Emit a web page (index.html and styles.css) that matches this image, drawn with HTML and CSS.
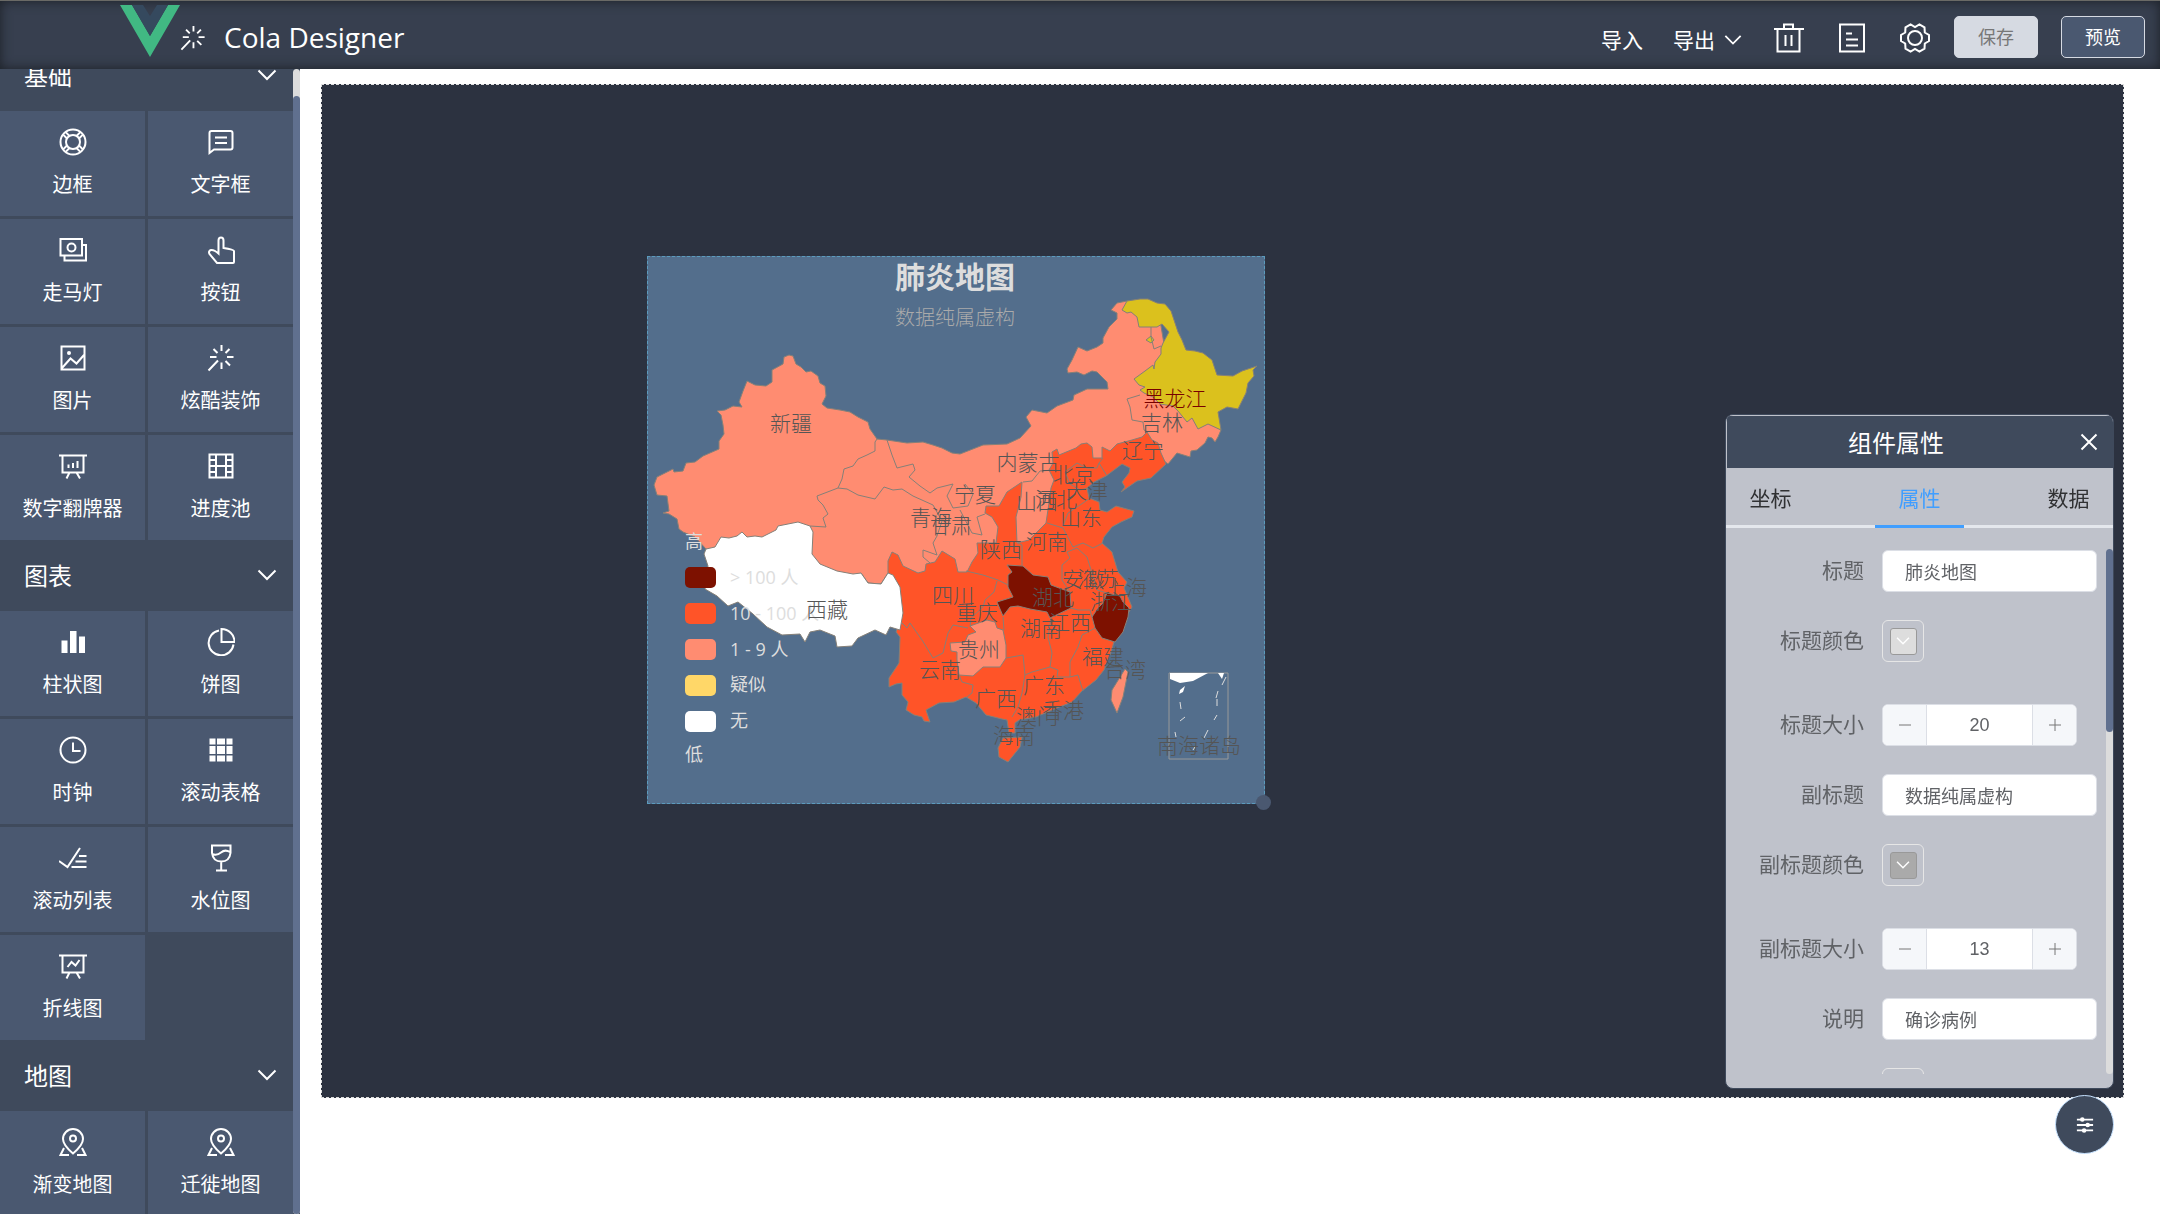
FILE: index.html
```html
<!DOCTYPE html>
<html lang="zh-CN">
<head>
<meta charset="utf-8">
<title>Cola Designer</title>
<link rel="stylesheet" href="styles.css">
</head>
<body>
<svg class="sprite" aria-hidden="true">
  <symbol id="i-help" viewBox="0 0 28 28"><circle cx="14" cy="14" r="12.5"/><circle cx="14" cy="14" r="7"/><path d="M20 10.5l3.6-3.6M17.5 8l3.6-3.6M20 17.5l3.6 3.6M17.5 20l3.6 3.6M8 10.5L4.4 6.9M10.5 8L6.900 4.400M8 17.5l-3.600 3.600M10.500 20l-3.600 3.600"/></symbol>
  <symbol id="i-chat" viewBox="0 0 28 28"><path d="M2.500 25V5q0-2 2-2h19q2 0 2 2v14.500q0 2-2 2H7zM8 9.500h12M8 15h12"/></symbol>
  <symbol id="i-money" viewBox="0 0 28 28"><path d="M1.500 3H23v16.500H1.500zM23.500 9H27v15.500H5.500v-5"/><circle cx="12.500" cy="11.500" r="4"/></symbol>
  <symbol id="i-hand" viewBox="0 0 28 28"><path d="M11.500 17.500V4.500q0-3 2.500-3t2.500 3v7.500q10 1.500 10.500 3v11q0 1-1 1H10L2.500 18q-1.500-3 1.500-4 3-.500 7.500 3.500z"/></symbol>
  <symbol id="i-pic" viewBox="0 0 28 28"><path d="M2.500 2.500h23v23h-23zM3 24l8.500-9.500 6 5L25 11"/><circle class="solid" cx="10" cy="9" r="2"/></symbol>
  <symbol id="i-magic" viewBox="0 0 28 28"><path d="M14.500 1v6M14.500 18.500V25M3 13h6.500M20 13h6.500M6.500 5l4 4M22.500 5l-4 4M18.500 17l4.500 4.500M11 16.500L1.500 26.500"/></symbol>
  <symbol id="i-board" viewBox="0 0 28 28"><path d="M0 3.500h28M3.500 4v16.500h21V4M10.500 20.500L7.500 26.500M17.500 20.500l3.500 6M9.500 16v-3.500M14 16v-5M18.500 16V9"/></symbol>
  <symbol id="i-film" viewBox="0 0 28 28"><path d="M2.500 2.500h23v23h-23zM9 2.500v23M19 2.500v23M9 14h10M2.500 8H9M2.500 14H9M2.500 20H9M19 8h6.500M19 14h6.500M19 20h6.500"/></symbol>
  <symbol id="i-bars" viewBox="0 0 28 28"><path class="solid" d="M2.500 12.500H8.500V25h-6zM11 3h6.500v22H11zM20 8.500h6V25h-6z"/></symbol>
  <symbol id="i-pie" viewBox="0 0 28 28"><path d="M12 2.500A12.500 12.500 0 1 0 26.500 16.500M14.500 1v13h13A13 13 0 0 0 14.500 1z"/></symbol>
  <symbol id="i-clock" viewBox="0 0 28 28"><circle cx="14" cy="14" r="12.500"/><path d="M14 6.500V15h7.500"/></symbol>
  <symbol id="i-grid" viewBox="0 0 28 28"><path class="solid" d="M2.500 2.500h6v6h-6zM10 2.500h8v6h-8zM19.500 2.500h6v6h-6zM2.500 10h6v8h-6zM10 10h8v8h-8zM19.500 10h6v8h-6zM2.500 19.500h6v6h-6zM10 19.500h8v6h-8zM19.500 19.500h6v6h-6z"/></symbol>
  <symbol id="i-finished" viewBox="0 0 28 28"><path d="M0 17l8.500 6L21 4M20 12h7.500M16.500 17.500h11M12.500 23h15"/></symbol>
  <symbol id="i-goblet" viewBox="0 0 28 28"><path d="M5 1.500h18.500V9q-1 8.500-9.250 8.500T5 9zM14.200 17.500v9M9 26.500h11M5 10q5 2 9-1.500T23 8"/></symbol>
  <symbol id="i-line" viewBox="0 0 28 28"><path d="M0 3.500h28M3.500 4v16.500h21V4M10.500 20.500L7.500 26.500M17.500 20.500l3.500 6M8.500 15l4-5 4 3.500 4-5.500"/></symbol>
  <symbol id="i-pin" viewBox="0 0 28 28"><path d="M14 25.500Q4 17 4 11a10 10 0 0 1 20 0q0 6-10 14.500zM5 20l-3.500 7H10M23 20l3.500 7H18"/><circle cx="14" cy="10.500" r="3"/></symbol>
  <symbol id="i-down" viewBox="0 0 20 20"><path d="M1.500 5.500L10 14l8.500-8.500"/></symbol>
  <symbol id="i-trash" viewBox="0 0 30 30"><path d="M0 6h30M3.500 6v22.500h22V6M10 6V1.500h9V6M11.500 12v11M17.500 12v11"/></symbol>
  <symbol id="i-doc" viewBox="0 0 30 30"><path d="M3 1.500h24v27H3zM9 10.500h6M9 16.500h12M9 22.500h12"/></symbol>
  <symbol id="i-gear" viewBox="0 0 30 30"><path d="M29 12v6l-4.200 2.500-.3 5.100-5.100 2.900-4.400-2.500-4.400 2.500-5.100-2.900-.3-5.100L1 18v-6l4.200-2.500.3-5.100 5.100-2.900L15 4l4.400-2.500 5.100 2.900.3 5.100z"/><circle cx="15" cy="15" r="7"/></symbol>
  <symbol id="i-close" viewBox="0 0 20 20"><path d="M2.500 2.500l15 15M17.500 2.500l-15 15"/></symbol>
  <symbol id="i-minus" viewBox="0 0 14 14"><path d="M1 7h12"/></symbol>
  <symbol id="i-plus" viewBox="0 0 14 14"><path d="M1 7h12M7 1v12"/></symbol>
  <symbol id="i-sliders" viewBox="0 0 20 20"><path d="M1 4h18M1 10h18M1 16h18"/><circle class="solid" cx="7" cy="4" r="2.500"/><circle class="solid" cx="13" cy="10" r="2.500"/><circle class="solid" cx="9" cy="16" r="2.500"/></symbol>
</svg>

<header class="topbar">
  <svg class="logo" viewBox="0 0 60 52" aria-hidden="true"><path fill="#41b883" d="M0 0h12l18 31L48 0h12L30 52z"/><path fill="#35495e" d="M12 0h11l7 11 7-11h11L30 31z"/></svg>
  <svg class="icon wand" aria-hidden="true"><use href="#i-magic"/></svg>
  <h1 class="brand">Cola Designer</h1>
  <nav class="actions">
    <a href="#import" class="action">导入</a>
    <a href="#export" class="action">导出 <svg class="icon icon-sm"><use href="#i-down"/></svg></a>
    <button class="icon-btn" type="button" aria-label="清空"><svg class="icon icon-lg"><use href="#i-trash"/></svg></button>
    <button class="icon-btn" type="button" aria-label="文档"><svg class="icon icon-lg"><use href="#i-doc"/></svg></button>
    <button class="icon-btn" type="button" aria-label="设置"><svg class="icon icon-lg"><use href="#i-gear"/></svg></button>
    <button class="btn btn-save" type="button">保存</button>
    <button class="btn btn-preview" type="button">预览</button>
  </nav>
</header>

<div class="workspace">
  <aside class="sidebar">
    <div class="library">
      <h2 class="group">基础 <svg class="icon icon-md"><use href="#i-down"/></svg></h2>
      <div class="tiles">
        <button class="tile" type="button"><svg class="icon"><use href="#i-help"/></svg>边框</button>
        <button class="tile" type="button"><svg class="icon"><use href="#i-chat"/></svg>文字框</button>
        <button class="tile" type="button"><svg class="icon"><use href="#i-money"/></svg>走马灯</button>
        <button class="tile" type="button"><svg class="icon"><use href="#i-hand"/></svg>按钮</button>
        <button class="tile" type="button"><svg class="icon"><use href="#i-pic"/></svg>图片</button>
        <button class="tile" type="button"><svg class="icon"><use href="#i-magic"/></svg>炫酷装饰</button>
        <button class="tile" type="button"><svg class="icon"><use href="#i-board"/></svg>数字翻牌器</button>
        <button class="tile" type="button"><svg class="icon"><use href="#i-film"/></svg>进度池</button>
      </div>
      <h2 class="group">图表 <svg class="icon icon-md"><use href="#i-down"/></svg></h2>
      <div class="tiles">
        <button class="tile" type="button"><svg class="icon"><use href="#i-bars"/></svg>柱状图</button>
        <button class="tile" type="button"><svg class="icon"><use href="#i-pie"/></svg>饼图</button>
        <button class="tile" type="button"><svg class="icon"><use href="#i-clock"/></svg>时钟</button>
        <button class="tile" type="button"><svg class="icon"><use href="#i-grid"/></svg>滚动表格</button>
        <button class="tile" type="button"><svg class="icon"><use href="#i-finished"/></svg>滚动列表</button>
        <button class="tile" type="button"><svg class="icon"><use href="#i-goblet"/></svg>水位图</button>
        <button class="tile" type="button"><svg class="icon"><use href="#i-line"/></svg>折线图</button>
      </div>
      <h2 class="group">地图 <svg class="icon icon-md"><use href="#i-down"/></svg></h2>
      <div class="tiles">
        <button class="tile" type="button"><svg class="icon"><use href="#i-pin"/></svg>渐变地图</button>
        <button class="tile" type="button"><svg class="icon"><use href="#i-pin"/></svg>迁徙地图</button>
      </div>
    </div>
    <div class="scrollbar"><div class="thumb"></div></div>
  </aside>

  <main class="stage">
    <div class="canvas">
      <section class="widget">
        <svg class="map" viewBox="648 257 616 546" role="img" aria-label="肺炎地图">
          <g class="province">
            <polygon class="low" points="784,357 789,355 793,356 796,364 801,367 806,372 811,371 818,376 820,383 825,386 826,396 822,404 827,408 840,410 850,412 858,417 868,422 870,429 877,439 887,440 907,443 923,442 933,445 942,448 952,453 960,454 983,445 1007,444 1020,438 1031,426 1026,417 1032,410 1047,413 1057,406 1073,400 1074,395 1087,389 1108,389 1107,382 1097,372 1092,371 1084,375 1077,372 1068,373 1067,369 1072,360 1078,347 1087,351 1097,347 1103,343 1103,338 1109,327 1117,319 1117,313 1111,310 1117,303 1127,301 1160,320 1165,350 1150,380 1180,405 1221,430 1218,437 1215,442 1212,438 1208,437 1205,443 1197,450 1191,451 1190,457 1177,453 1168,464 1150,450 1118,455 1097,463 1085,478 1060,500 1045,530 1020,560 960,590 900,590 893,583 888,573 881,584 868,583 861,573 840,585 810,560 760,560 706,549 695,537 683,532 679,529 677,519 669,514 663,513 669,511 667,496 657,495 654,485 657,477 673,469 674,472 683,471 686,463 695,462 703,456 719,449 719,441 724,434 723,425 721,415 717,411 725,410 733,406 742,407 739,402 743,391 747,381 755,385 766,386 772,382 772,370 783,364"/>
            <path class="mid" d="M888 573v-12l4-9 6 3 5 11 15 7 7-2 1-7 9-2 7-11 13 8 3 13 9 0 5-10 6-9-1-10 19 0 2-16-6-10-7-4 1-7h13l8-14 15-10-1 15-5 20 1 26 12-3 17-17 3-20 2-15 3-8-5-10 4-7-1-11 5-3 2 6 17-7 5-4 6-1 5 4 1 11 9 0V447l8 4 7-7 15-4 10-3 5-5 5 8 6 3 3 10 5 11-15 14-14 3-16 11 4-5-3-5 7-9 1-5-8-4-8 6-8 6-12 6-7 6 2 10 10 4 1 8 7 2 9-6 18 5-2 6-11 5-9 5-8 10-2 6 10 9 6 20 9 10-3 6 3 7 5 12-5 8-3 12-10 15-3 10-7 18-8 10-14 11-10 11-20 8-16 7-17 3-4 3v10h-6l-2-13-5-1-16-4-10-12-10-6-12 5-15 1-13 7 4 12-6-1-2-4-8-2-8-5 2-8-6-7v-12l-6 1-7 3v-9l10-15 1-26-4-5 6-17-3-26-7-12z"/>
            <path class="none" d="M706 549l9-2 6-10 8 1 8-2 5-4 5 5 8-1 7 1 6-3 8-4 2-4 20-4 12 4 3 6-1 22 8 10 17 7 16 3 8-1 7 10 13 1 7-11 5 2 7 12 3 26-3 17-10-3-4 8-11-5-17 8-6 8-15 1-2-11-15-6-10 2-5 10-5-8-18 1-15-8-14-13-15-12-10 4-11-10-12-7 3-23-4-12z"/>
            <path class="suspect" d="M1127 301l13-2h8l9 4 8 1 6 7 3 9 4 12 4 8 4 10 9 1 8 2 9 7 5 15 16 1 9-5 15-5-4 4 1 6-6 7-2 10-8 16-11-2-9 5 3 18-13-6-10 5-6-11-5 4-9-11-5-5-13-2-7-7-9-4-4-3 5-3-6-2-5-6 11-8 8-6 1 4 1-7 6-8v-6l2-5 6-11-7-8-5 3h-18l-2-10-6-5-4 1-5-3zM1146 340l5-4 3 4-3 3z"/>
            <path class="low" d="M950 643l15-1 3-7 8-3-6-6 17-6 8 2 2 6 6 2 3 15v13l-6 9h-17l-10 9-14-1-2-15v-8l-6-1z"/>
            <path class="high" d="M1007 565l16 1 10 9 15 2 3 8 19 7 1 16-21 10-3-6-17-3-12-3-8 1-7 9-6-14 16-5-5-10 0-12 4-3zM1107 593l13 3 3 6 6 6-1 9-5 15-8 10-13-4-7-10-3-11 6-9 5-5z"/>
            <path class="mid" d="M1003 738l19-1-2 10-12 15-9-5-1-9z"/>
            <path class="low" d="M1125 669l3 3-5 25-6 16-6-13 1-10z"/>
            <path class="border" d="M877 439l-2 3v9l-8 4-9 4-5 7-9 3-2 10-4 9-21 8 1 4 5 5 5 9-5 4 3 9-16-1M887 440l5 15 5 13 16-4 2 6-6 7 11 9 10 7 7-5 16-4-6 12 6 12 15-2 5-12-8-10M838 488l9 1 11 6 17 4 9-12 9 3 9-1 11 7 20 9 9 16-5 15-4 7 4 12-14-5 0 7 7 6M960 510l12 23 10 2-5-18 8-3M1140 395l-13 4 3 8 2 13 11 2 1 8 4 2M1151 327v10l3 12 7-3M1023 482l9-1 8-10 14-1M966 571l17 4 15 5 10 5M997 581l-3 11-9 8-2 7-12 11-1 9M902 623l5 5 3-5 12 17 11 18 10-5 5-20 5-8 15 3M959 675l3 7 11 3-1 8-5 4M1003 617l1 13M1006 658l17-3 2 20 7-3 18-5 2-14-4-16 3-19M1050 667l8 3-1 7 13 0 8-2 5 16M1070 677v-15l8-15 4-12 13-7M1025 675l-3 18-4 14-6 10M1071 608l7 2h12l2 7M1070 592l-8-12v-15l8-7-3-6 10-4 10 9 5 16 5 17 10 3M1047 523l16 5 10 19 10-4 10 5 10-5M1018 543l4 2v20M1063 526l5-13 15-10 7-5M1065 472l12-9 10 5h10l2-5 4-5M1099 463l8 13M1065 472l5 12 10 6 8-2"/>
          </g>
          <g class="islands">
            <path class="frame" d="M1169 673h59v86h-59z"/>
            <path d="M1170 673h38l-15 8-13 2-10-4zM1218 673h6l-2 6zM1180 690l5-4-2 6-4 2z"/>
            <path class="dash" d="M1226 677l-4 8M1218 691l-2 7M1217 699v7M1217 715l-3 5M1208 730l-4 8M1195 747l-2 3M1175 732l1 5M1180 721l5-4M1180 702l1 7"/>
          </g>
          <g class="legend">
            <text x="685" y="548">高</text>
            <rect fill="#7d1100" x="685" y="567" width="31" height="21" rx="5"/><text x="730" y="584">&gt; 100 人</text>
            <rect fill="#ff5428" x="685" y="603" width="31" height="21" rx="5"/><text x="730" y="620">10 - 100 人</text>
            <rect fill="#ff8c71" x="685" y="639" width="31" height="21" rx="5"/><text x="730" y="656">1 - 9 人</text>
            <rect fill="#ffd768" x="685" y="675" width="31" height="21" rx="5"/><text x="730" y="691">疑似</text>
            <rect fill="#fff" x="685" y="711" width="31" height="21" rx="5"/><text x="730" y="727">无</text>
            <text x="685" y="761">低</text>
          </g>
          <g class="names">
            <text x="791" y="431">新疆</text><text x="827" y="617">西藏</text><text x="931" y="525">青海</text><text x="951" y="533">甘肃</text>
            <text x="975" y="502">宁夏</text><text x="1028" y="470">内蒙古</text><text x="1074" y="482">北京</text><text x="1087" y="498">天津</text>
            <text x="1056" y="507">河北</text><text x="1037" y="509">山西</text><text x="1081" y="525">山东</text><text x="1047" y="549">河南</text>
            <text x="1143" y="458">辽宁</text><text x="1162" y="430">吉林</text><text x="1001" y="557">陕西</text><text x="953" y="603">四川</text>
            <text x="977" y="620">重庆</text><text x="1053" y="605">湖北</text><text x="1083" y="587">安徽</text><text x="1098" y="586">江苏</text>
            <text x="1126" y="595">上海</text><text x="1111" y="609">浙江</text><text x="1070" y="630">江西</text><text x="1041" y="636">湖南</text>
            <text x="979" y="657">贵州</text><text x="940" y="677">云南</text><text x="1103" y="664">福建</text><text x="1125" y="677">台湾</text>
            <text x="996" y="706">广西</text><text x="1044" y="693">广东</text><text x="1037" y="724">澳门</text><text x="1063" y="718">香港</text>
            <text x="1014" y="743">海南</text><text x="1199" y="753">南海诸岛</text><text class="focus" x="1175" y="406">黑龙江</text>
          </g>
          <text class="map-title" x="955" y="288">肺炎地图</text>
          <text class="map-sub" x="955" y="325">数据纯属虚构</text>
        </svg>
        <span class="handle"></span>
      </section>
    </div>
  </main>
</div>

<section class="panel">
  <header class="panel-head">
    <h2 class="panel-title">组件属性</h2>
    <button class="panel-close" type="button" aria-label="关闭"><svg class="icon icon-md"><use href="#i-close"/></svg></button>
  </header>
  <div class="tabs" role="tablist">
    <button class="tab" role="tab" type="button">坐标</button>
    <button class="tab active" role="tab" type="button" aria-selected="true">属性</button>
    <button class="tab" role="tab" type="button">数据</button>
  </div>
  <div class="panel-body">
    <form class="form">
      <div class="row"><label class="label" for="title">标题</label><input class="input" id="title" type="text" value="肺炎地图"></div>
      <div class="row row-color"><label class="label" for="title-color">标题颜色</label><button class="picker" id="title-color" type="button" aria-label="标题颜色"><span class="swatch light"><svg class="icon icon-xs"><use href="#i-down"/></svg></span></button></div>
      <div class="row"><label class="label" for="title-size">标题大小</label><div class="stepper"><button class="step" type="button" aria-label="减少"><svg class="icon"><use href="#i-minus"/></svg></button><input class="number" id="title-size" type="text" value="20"><button class="step" type="button" aria-label="增加"><svg class="icon"><use href="#i-plus"/></svg></button></div></div>
      <div class="row"><label class="label" for="sub">副标题</label><input class="input" id="sub" type="text" value="数据纯属虚构"></div>
      <div class="row row-color"><label class="label" for="sub-color">副标题颜色</label><button class="picker" id="sub-color" type="button" aria-label="副标题颜色"><span class="swatch grey"><svg class="icon icon-xs"><use href="#i-down"/></svg></span></button></div>
      <div class="row"><label class="label" for="sub-size">副标题大小</label><div class="stepper"><button class="step" type="button" aria-label="减少"><svg class="icon"><use href="#i-minus"/></svg></button><input class="number" id="sub-size" type="text" value="13"><button class="step" type="button" aria-label="增加"><svg class="icon"><use href="#i-plus"/></svg></button></div></div>
      <div class="row"><label class="label" for="note">说明</label><input class="input" id="note" type="text" value="确诊病例"></div>
      <div class="row row-color"><span class="label"></span><button class="picker" type="button" aria-label="颜色"></button></div>
    </form>
    <div class="scrollbar"><div class="thumb"></div></div>
  </div>
</section>
<button class="fab" type="button" aria-label="属性面板"><svg class="icon"><use href="#i-sliders"/></svg></button>
</body>
</html>
```
FILE: styles.css
```css
* { box-sizing: border-box; }
body {
  margin: 0;
  height: 100vh;
  overflow: hidden;
  display: flex;
  flex-direction: column;
  background: #fff;
  color: #fff;
  font-family: "Open Sans", "Noto Sans CJK SC", sans-serif;
  font-size: 20px;
  font-weight: 400;
}
h1, h2 { margin: 0; font-weight: 400; }
button { margin: 0; padding: 0; border: 0; background: none; color: inherit; font: inherit; }
input { font: inherit; }
a { color: inherit; text-decoration: none; }
.sprite { position: absolute; width: 0; height: 0; }
.icon { display: block; flex: none; width: 28px; height: 28px; fill: none; stroke: currentColor; stroke-width: 2; }
.icon-lg { width: 30px; height: 30px; }
.icon-md { width: 20px; height: 20px; }
.icon-sm { width: 18px; height: 18px; }
.icon-xs { width: 14px; height: 14px; }
.solid { fill: currentColor; stroke: none; }

/* top bar */
.topbar {
  flex: none;
  height: 69px;
  display: flex;
  align-items: center;
  padding: 0 15px 0 120px;
  border-top: 1px solid #6a6a66;
  background: #373f4f;
  box-shadow: inset 0 0 12px #1c2026;
}
.logo { width: 60px; height: 52px; margin-bottom: 8px; }
.wand { width: 26px; height: 26px; margin-top: 5px; }
.brand { margin: 4px 0 0 18px; font-size: 28px; line-height: 40px; }
.actions { display: flex; align-items: center; gap: 30px; margin-left: auto; }
.action { display: flex; align-items: center; gap: 9px; margin-top: 10px; font-size: 21px; line-height: 30px; }
.icon-btn { margin: 5px 1px 0 2px; }
.btn { width: 84px; height: 42px; margin-top: 4px; border-radius: 5px; font-size: 18px; line-height: 38px; border: 1px solid #d6dae2; }
.btn-save { margin-left: -7px; background: #d6dae2; color: #777; }
.btn-preview { margin-left: -7px; background: #4a5870; }

/* component library */
.workspace { flex: 1; min-height: 0; display: flex; }
.sidebar { flex: none; width: 300px; display: flex; overflow: hidden; background: #3f4a5c; }
.library { flex: 1; margin-top: -29px; }
.group { display: flex; align-items: center; justify-content: space-between; height: 71px; padding: 0 16px 2px 24px; font-size: 24px; }
.tiles { display: grid; grid-template-columns: 1fr 1fr; gap: 3px; }
.tile { display: flex; flex-direction: column; align-items: center; gap: 15px; height: 105px; padding-top: 17px; background: #4a5870; line-height: 28px; }
.scrollbar { width: 7px; flex: none; border-radius: 4px; background: #dcdcdc; }
.thumb { border-radius: 4px; background: #60708f; }
.sidebar .thumb { height: calc(100% - 27px); margin-top: 27px; }

/* canvas */
.stage { flex: 1; min-width: 0; padding: 15px 36px 0 21px; }
.canvas { position: relative; aspect-ratio: 16 / 9; border: 1px dashed #ddd; background: #2c3240; }
.widget { position: absolute; left: 325px; top: 171px; width: 618px; height: 548px; border: 1px dashed #5b9bbd; background: #536e8c; }
.map { display: block; width: 100%; height: 100%; }
.handle { position: absolute; right: -7px; bottom: -7px; width: 15px; height: 15px; border-radius: 50%; background: #4a5870; }
.province path, .province polygon { stroke: #858078; stroke-width: 1; stroke-linejoin: round; }
.low { fill: #ff8c71; }
.mid { fill: #ff5428; }
.high { fill: #7d1100; }
.none { fill: #fff; }
.suspect { fill: #dbc11d; }
.border { fill: none; }
.islands { fill: #fff; }
.islands .frame { fill: none; stroke: #999; }
.islands .dash { fill: none; stroke: #ddd; }
.legend text { fill: #ddd; font-size: 18px; }
.names text { fill: #555; font-size: 21px; font-weight: 300; text-anchor: middle; }
.names .focus { fill: #700; }
.map-title { fill: #ddd; font-size: 30px; font-weight: 700; text-anchor: middle; }
.map-sub { fill: #aaa; font-size: 20px; font-weight: 300; text-anchor: middle; }

/* property panel */
.panel {
  position: fixed;
  top: 414px;
  right: 46px;
  width: 389px;
  height: 675px;
  display: flex;
  flex-direction: column;
  overflow: hidden;
  border: 1px solid #3f4a5c;
  border-radius: 8px;
  background: #bfc2cb;
  color: #303133;
}
.panel-head { display: flex; align-items: center; height: 53px; flex: none; padding: 0 14px 0 0; border-top: 1px solid #bfc2cb; border-left: 1px solid #bfc2cb; background: #3f4a5c; color: #fff; }
.panel-title { flex: 1; padding: 0 14px 2px 0; font-size: 24px; text-align: center; }
.tabs { display: flex; justify-content: space-between; height: 60px; flex: none; border-bottom: 3px solid #e4e7ed; }
.tab { width: 89px; height: 60px; border-bottom: 3px solid transparent; font-size: 21px; }
.tab.active { border-color: #409eff; color: #409eff; }
.panel-body { display: flex; height: 525px; margin-top: 21px; overflow: hidden; }
.form { flex: 1; min-width: 0; display: flex; flex-direction: column; gap: 28px; padding: 1px 9px 0 0; }
.row { display: flex; height: 42px; flex: none; }
.row-color { margin-bottom: 14px; }
.label { flex: none; width: 138px; margin-right: 18px; font-size: 21px; line-height: 40px; text-align: right; color: #606266; }
.input { flex: 1; min-width: 0; padding: 0 22px; border: 1px solid #dcdfe6; border-radius: 6px; background: #fff; font-size: 18px; color: #606266; }
.picker { display: grid; place-items: center; width: 42px; height: 42px; border: 1px solid #e6e6e6; border-radius: 6px; }
.swatch { display: grid; place-items: center; width: 27px; height: 27px; border: 1px solid #999; border-radius: 3px; color: #fff; }
.light { background: #ddd; }
.grey { background: #aaa; }
.stepper { display: flex; width: 195px; overflow: hidden; border: 1px solid #dcdfe6; border-radius: 6px; background: #fff; }
.step { display: grid; place-items: center; width: 43px; background: #f5f7fa; color: #777; }
.step .icon { width: 14px; height: 14px; stroke-width: 1; }
.number { flex: 1; min-width: 0; padding: 0; border: 1px solid #dcdfe6; border-width: 0 1px; text-align: center; font: 18px "Liberation Sans", sans-serif; color: #606266; }
.panel .thumb { height: 183px; }
.fab { position: fixed; right: 46px; bottom: 60px; display: grid; place-items: center; width: 59px; height: 59px; border: 1px solid #c6e2ff; border-radius: 50%; background: #3f4a5c; }
.fab .icon { width: 18px; height: 18px; }
```
